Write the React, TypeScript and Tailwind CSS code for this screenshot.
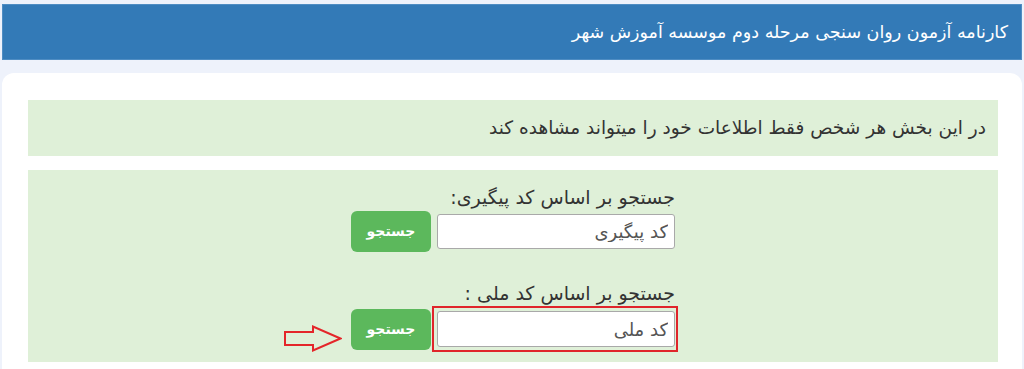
export default function App() {
  return (
    <div
      dir="rtl"
      className="w-[1024px] h-[369px] overflow-hidden bg-[#eef2fb] pt-[4px]"
      style={{ fontFamily: '"DejaVu Sans", "Noto Sans", sans-serif' }}
    >
      <div className="mx-[2px] h-[56px] bg-[#337ab7] border border-[#4f8dc3] flex items-center pr-[13px] text-white text-[17.5px]">
        کارنامه آزمون روان سنجی مرحله دوم موسسه آموزش شهر
      </div>
      <div className="mt-[13px] mx-[2px] h-[300px] bg-white rounded-t-[12px] pt-[27px] pr-[24px] pl-[26px]">
        <div className="h-[56px] bg-[#dff0d8] flex items-center pr-[12px] text-[18.5px] text-[#333]">
          در این بخش هر شخص فقط اطلاعات خود را میتواند مشاهده کند
        </div>
        <div className="mt-[14px] h-[192px] bg-[#dff0d8] flex justify-center pl-[3px] pt-[15px]">
          <div className="w-[327px] flex flex-col">
            <div className="h-[24px] leading-[24px] pr-[3px] text-[19px] text-[#333] whitespace-nowrap">
              جستجو بر اساس کد پیگیری:
            </div>
            <div className="mt-[2px] flex items-center pr-[3px] gap-[6px]">
              <input
                readOnly
                placeholder="کد پیگیری"
                className="w-[238px] h-[35px] bg-white border border-[#a9a9a9] rounded-[3px] px-[6px] text-[18px] placeholder:text-[#555] outline-none"
              />
              <button className="w-[80px] h-[41px] rounded-[6px] bg-[#5cb85c] text-white text-[14px] font-bold">
                جستجو
              </button>
            </div>
            <div className="mt-[29px] h-[24px] leading-[24px] pr-[3px] text-[19px] text-[#333] whitespace-nowrap">
              جستجو بر اساس کد ملی :
            </div>
            <div className="mt-[1px] flex items-center gap-[1px] relative">
              <div className="border-2 border-[#e0252b] pt-[3px] pb-[3px] pr-[1px] pl-[3px]">
                <input
                  readOnly
                  placeholder="کد ملی"
                  className="block w-[238px] h-[36px] bg-white border border-[#a9a9a9] rounded-[3px] px-[6px] text-[18px] placeholder:text-[#555] outline-none"
                />
              </div>
              <button className="w-[80px] h-[41px] rounded-[6px] bg-[#5cb85c] text-white text-[14px] font-bold">
                جستجو
              </button>
              <svg
                className="absolute left-[-67px] top-[19px]"
                width="58"
                height="27"
                viewBox="0 0 58 27"
              >
                <polygon
                  points="1,7 29,7 29,1.5 56.5,13.5 29,25.5 29,20 1,20"
                  fill="none"
                  stroke="#e4262a"
                  strokeWidth="2"
                />
              </svg>
            </div>
          </div>
        </div>
      </div>
    </div>
  );
}
